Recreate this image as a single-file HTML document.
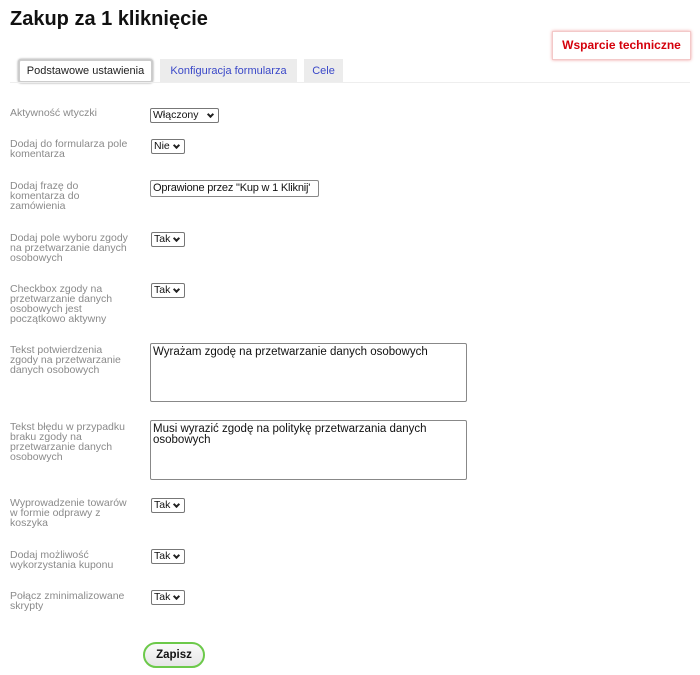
<!DOCTYPE html>
<html><head><meta charset="utf-8"><style>
*{margin:0;padding:0;box-sizing:border-box}
body{width:700px;height:675px;background:#fff;font-family:"Liberation Sans",Arial,sans-serif;position:relative;overflow:hidden}
.a{position:absolute}
h1{position:absolute;left:10px;top:8px;font-size:20px;font-weight:bold;color:#111}
.sup{left:552px;top:31px;width:139px;height:29px;border:1px solid #f3c9c9;box-shadow:0 0 3px #f0a0a0;color:#d4000b;font-weight:bold;font-size:12px;line-height:27px;text-align:center}
.tab{top:59px;height:24px;background:#ececec;color:#3a48c8;font-size:11px;line-height:24px;text-align:center}
.tab.on{background:#fff;border:2px solid #ccc;border-radius:3px;color:#222;box-shadow:0 0 2px #999;line-height:20px}
.line{left:10px;top:82px;width:680px;height:1px;background:#eee}
.l{left:10px;width:120px;font-size:10.5px;line-height:10px;color:#8a8a8a}
.s{height:15px;border:1px solid #777;border-radius:2px;font-size:10.5px;line-height:13px;color:#111;padding-left:2px;background:#fff}
.s:after{content:"";position:absolute;right:5px;top:3px;width:3px;height:3px;border-right:2px solid #222;border-bottom:2px solid #222;transform:rotate(45deg)}
.t{border:1px solid #888;border-radius:2px;font-size:11.5px;line-height:11px;color:#111;padding:3px 2px}
.btn{left:143px;top:642px;width:62px;height:26px;border:2px solid #6cc94a;border-radius:13px;background:linear-gradient(#fafafa,#e6e6e6);font-weight:bold;font-size:11.5px;text-align:center;line-height:22px;color:#111}
</style></head><body>
<h1>Zakup za 1 kliknięcie</h1>
<div class="a sup">Wsparcie techniczne</div>
<div class="a tab on" style="left:18px;width:135px">Podstawowe ustawienia</div>
<div class="a tab" style="left:160px;width:137px">Konfiguracja formularza</div>
<div class="a tab" style="left:304px;width:39px">Cele</div>
<div class="a line"></div>

<div class="a l" style="top:108px">Aktywność wtyczki</div>
<div class="a s" style="left:150px;top:108px;width:69px">Włączony</div>

<div class="a l" style="top:139px">Dodaj do formularza pole<br>komentarza</div>
<div class="a s" style="left:151px;top:139px;width:34px">Nie</div>

<div class="a l" style="top:181px">Dodaj frazę do<br>komentarza do<br>zamówienia</div>
<div class="a t" style="left:150px;top:180px;width:169px;height:17px;padding:2px 2px;font-size:11px;letter-spacing:-0.2px;white-space:nowrap;overflow:hidden">Oprawione przez "Kup w 1 Kliknij'</div>

<div class="a l" style="top:233px">Dodaj pole wyboru zgody<br>na przetwarzanie danych<br>osobowych</div>
<div class="a s" style="left:151px;top:232px;width:34px">Tak</div>

<div class="a l" style="top:284px">Checkbox zgody na<br>przetwarzanie danych<br>osobowych jest<br>początkowo aktywny</div>
<div class="a s" style="left:151px;top:283px;width:34px">Tak</div>

<div class="a l" style="top:345px">Tekst potwierdzenia<br>zgody na przetwarzanie<br>danych osobowych</div>
<div class="a t" style="left:150px;top:343px;width:317px;height:59px">Wyrażam zgodę na przetwarzanie danych osobowych</div>

<div class="a l" style="top:422px">Tekst błędu w przypadku<br>braku zgody na<br>przetwarzanie danych<br>osobowych</div>
<div class="a t" style="left:150px;top:420px;width:317px;height:60px">Musi wyrazić zgodę na politykę przetwarzania danych<br>osobowych</div>

<div class="a l" style="top:498px">Wyprowadzenie towarów<br>w formie odprawy z<br>koszyka</div>
<div class="a s" style="left:151px;top:498px;width:34px">Tak</div>

<div class="a l" style="top:550px">Dodaj możliwość<br>wykorzystania kuponu</div>
<div class="a s" style="left:151px;top:549px;width:34px">Tak</div>

<div class="a l" style="top:591px">Połącz zminimalizowane<br>skrypty</div>
<div class="a s" style="left:151px;top:590px;width:34px">Tak</div>

<div class="a btn">Zapisz</div>
</body></html>
